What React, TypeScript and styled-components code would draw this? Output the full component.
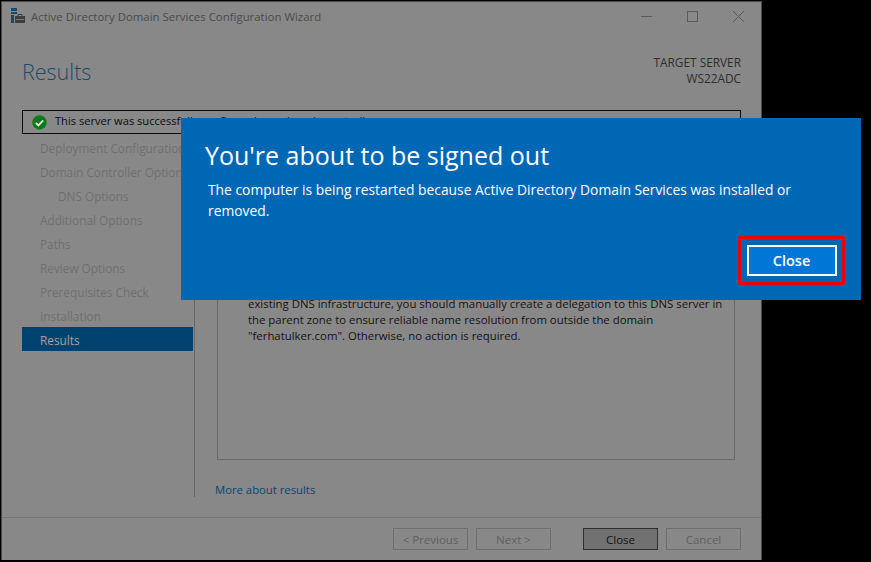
import React from "react";
import styled, { createGlobalStyle } from "styled-components";

const Global = createGlobalStyle`
  html, body { margin: 0; padding: 0; background: #000; }
  body { width: 871px; height: 562px; overflow: hidden; font-family: "Open Sans", "Noto Sans", "Liberation Sans", sans-serif; }
`;
const Screen = styled.div`
  position: relative;
  width: 871px;
  height: 562px;
  background: #000;
  padding: 1px 0 0 1px;
  box-sizing: border-box;
`;
const Wizard = styled.div`
  width: 761px;
  height: 559px;
  box-sizing: border-box;
  background: #888888;
  border: 1px solid #4a4a4a;
  border-bottom: none;
  display: flex;
  flex-direction: column;
`;
const TitleBar = styled.div`
  height: 28px;
  display: flex;
  align-items: center;
  padding-left: 8px;
  gap: 5px;
`;
const TitleText = styled.span`
  font-size: 11.42px;
  color: #4c4c4c;
  flex: 1;
`;
const WindowControls = styled.div`
  display: flex;
  align-items: center;
  gap: 35px;
  padding-right: 17px;
  color: #5a5a5a;
`;
const Header = styled.div`
  height: 80px;
  display: flex;
  justify-content: space-between;
  padding: 0 20px;
`;
const PageTitle = styled.h1`
  margin: 26px 0 0;
  font-size: 21.5px;
  font-weight: 300;
  color: #1d4a66;
  line-height: 32px;
`;
const Target = styled.div`
  margin-top: 24px;
  text-align: right;
  font-size: 11.85px;
  line-height: 16px;
  color: #2e2e2e;
`;
const StatusBar = styled.div`
  margin: 0 20px;
  height: 24px;
  box-sizing: border-box;
  border: 1px solid #0c0c0c;
  display: flex;
  align-items: center;
  padding-left: 9px;
  gap: 8px;
  font-size: 11.1px;
  color: #0d0d0d;
`;
const StatusText = styled.span`
  padding-bottom: 3px;
`;
const Main = styled.div`
  flex: 1;
  display: flex;
  min-height: 0;
  padding-left: 20px;
`;
const Nav = styled.nav`
  width: 171px;
  padding-top: 1px;
  display: flex;
  flex-direction: column;
`;
const NavItem = styled.div<{ $indent?: boolean; $active?: boolean }>`
  height: 24px;
  box-sizing: border-box;
  padding-top: 2px;
  display: flex;
  align-items: center;
  padding-left: ${(p) => (p.$indent ? 36 : 18)}px;
  font-size: 11.8px;
  white-space: nowrap;
  color: ${(p) => (p.$active ? "#a3a3a3" : "#707070")};
  background: ${(p) => (p.$active ? "#00426f" : "transparent")};
`;
const Pane = styled.div`
  flex: none;
  width: 566px;
  display: flex;
  flex-direction: column;
  margin-left: 1px;
  border-left: 1px solid #666666;
  padding: 0 25px 0 20px;
  height: 363px;
  box-sizing: border-box;
`;
const ResultBox = styled.div`
  flex: none;
  height: 326px;
  box-sizing: border-box;
  margin-left: 2px;
  border: 1px solid #6a6a6a;
  padding: 161px 6px 0 30px;
  font-size: 11.38px;
  line-height: 16px;
  color: #141414;
`;
const MoreLink = styled.a`
  margin-top: 22px;
  font-size: 11.3px;
  line-height: 16px;
  color: #0b456d;
`;
const Footer = styled.div`
  height: 43px;
  box-sizing: border-box;
  border-top: 1px solid #757575;
  display: flex;
  justify-content: flex-end;
  align-items: flex-start;
  padding: 10px 20px 0 0;
  gap: 8px;
`;
const WizardButton = styled.button<{ $primary?: boolean; $gapBefore?: boolean }>`
  width: 75px;
  height: 22px;
  padding: 0;
  box-sizing: border-box;
  font-family: inherit;
  font-size: 11.5px;
  margin-left: ${(p) => (p.$gapBefore ? 24 : 0)}px;
  color: ${(p) => (p.$primary ? "#111111" : "#606060")};
  background: ${(p) => (p.$primary ? "#717171" : "transparent")};
  border: 1px solid ${(p) => (p.$primary ? "#2f2f2f" : "#6e6e6e")};
`;
const Banner = styled.div`
  position: absolute;
  left: 181px;
  top: 118px;
  width: 680px;
  height: 182px;
  box-sizing: border-box;
  background: #0067b5;
  color: #fff;
  padding: 19px 24px 0;
`;
const BannerTitle = styled.h2`
  margin: 0;
  font-size: 25px;
  font-weight: 400;
  line-height: 36px;
`;
const BannerMessage = styled.p`
  margin: 6px 0 0 3px;
  width: 600px;
  font-size: 13.83px;
  line-height: 21px;
`;
const Highlight = styled.div`
  position: absolute;
  right: 16px;
  bottom: 15px;
  width: 107px;
  height: 49px;
  box-sizing: border-box;
  border: 3px solid #f00000;
  border-radius: 2px;
  display: flex;
  align-items: center;
  justify-content: center;
`;
const BannerButton = styled.button`
  width: 90px;
  height: 31px;
  padding: 0;
  box-sizing: border-box;
  background: #0076d7;
  border: 2px solid #fff;
  color: #fff;
  font-family: inherit;
  font-size: 14.5px;
  font-weight: 600;
`;

const navItems: { label: string; indent?: boolean; active?: boolean }[] = [
  { label: "Deployment Configuration" },
  { label: "Domain Controller Options" },
  { label: "DNS Options", indent: true },
  { label: "Additional Options" },
  { label: "Paths" },
  { label: "Review Options" },
  { label: "Prerequisites Check" },
  { label: "Installation" },
  { label: "Results", active: true },
];

const AppIcon = () => (
  <svg width="16" height="16" viewBox="0 0 16 16">
    <rect x="1" y="0" width="6" height="3" fill="#134a72" />
    <rect x="1" y="4" width="6" height="2" fill="#134a72" />
    <rect x="1" y="7" width="3" height="8" fill="#134a72" />
    <rect x="5" y="8" width="10" height="7" fill="#3d3d3d" />
    <rect x="6" y="11" width="8" height="1" fill="#7a7a7a" />
    <path d="M8 8V6.5h4V8" fill="none" stroke="#3d3d3d" />
  </svg>
);
const CheckIcon = () => (
  <svg width="15" height="15" viewBox="0 0 15 15">
    <circle cx="7.5" cy="7.5" r="7.2" fill="#0c7a1a" />
    <path d="M3.8 7.8l2.6 2.6 4.8-5" fill="none" stroke="#e4e4e4" strokeWidth="1.8" />
  </svg>
);

export default function App() {
  return (
    <>
      <Global />
      <Screen>
        <Wizard>
          <TitleBar>
            <AppIcon />
            <TitleText>Active Directory Domain Services Configuration Wizard</TitleText>
            <WindowControls>
              <svg width="11" height="11" viewBox="0 0 11 11"><path d="M0 5.5h11" stroke="currentColor" fill="none" /></svg>
              <svg width="11" height="11" viewBox="0 0 11 11"><rect x=".5" y=".5" width="10" height="10" stroke="currentColor" fill="none" /></svg>
              <svg width="11" height="11" viewBox="0 0 11 11"><path d="M0 0l11 11M11 0L0 11" stroke="currentColor" fill="none" /></svg>
            </WindowControls>
          </TitleBar>
          <Header>
            <PageTitle>Results</PageTitle>
            <Target>
              TARGET SERVER
              <br />
              WS22ADC
            </Target>
          </Header>
          <StatusBar>
            <CheckIcon />
            <StatusText>This server was successfully configured as a domain controller</StatusText>
          </StatusBar>
          <Main>
            <Nav>
              {navItems.map((n) => (
                <NavItem key={n.label} $indent={n.indent} $active={n.active}>
                  {n.label}
                </NavItem>
              ))}
            </Nav>
            <Pane>
              <ResultBox>
                existing DNS infrastructure, you should manually create a delegation to this DNS server in
                the parent zone to ensure reliable name resolution from outside the domain
                "ferhatulker.com". Otherwise, no action is required.
              </ResultBox>
              <MoreLink>More about results</MoreLink>
            </Pane>
          </Main>
          <Footer>
            <WizardButton>&lt; Previous</WizardButton>
            <WizardButton>Next &gt;</WizardButton>
            <WizardButton $primary $gapBefore>Close</WizardButton>
            <WizardButton>Cancel</WizardButton>
          </Footer>
        </Wizard>
        <Banner>
          <BannerTitle>You're about to be signed out</BannerTitle>
          <BannerMessage>
            The computer is being restarted because Active Directory Domain Services was installed or removed.
          </BannerMessage>
          <Highlight>
            <BannerButton>Close</BannerButton>
          </Highlight>
        </Banner>
      </Screen>
    </>
  );
}
